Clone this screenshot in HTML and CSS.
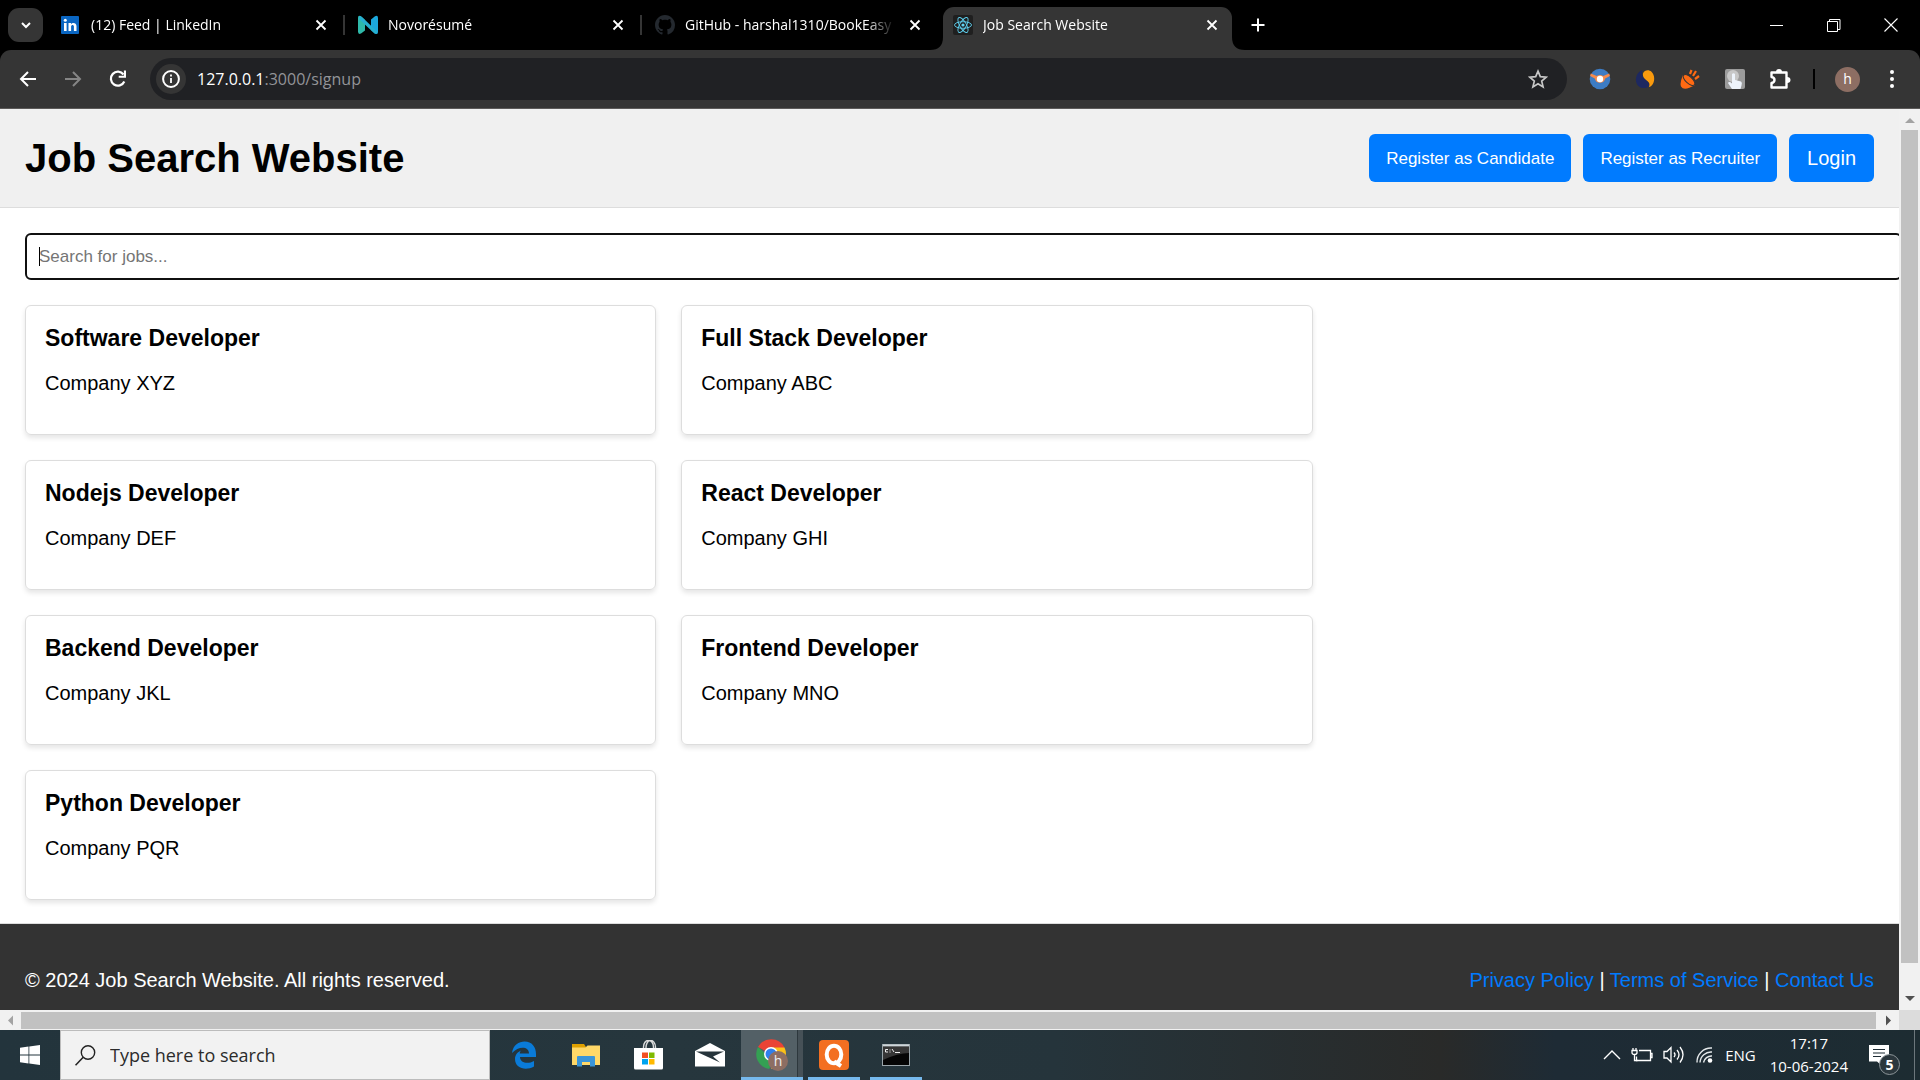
FILE: index.html
```html
<!DOCTYPE html>
<html lang="en">
<head>
<meta charset="utf-8">
<title>Job Search Website</title>
<link rel="stylesheet" href="styles.css">
</head>
<body>
<div class="desktop">
  <div class="browser">
    <div class="tabstrip">
      <button class="tab-search" aria-label="Search tabs"><svg width="12" height="12" viewBox="0 0 12 12"><path d="M2 4l4 4 4-4" fill="none" stroke="#fff" stroke-width="2"/></svg></button>
      <div class="tab">
        <svg class="favicon" viewBox="0 0 20 20"><rect x="0" y="1" width="18" height="18" rx="1" fill="#0a66c2"/><path d="M3 8h2.600v8H3zM7.500 8H10v1.200C11 7.300 15.500 7.200 15.500 11v5h-2.600v-4.500c0-2.300-2.800-2-2.800 0V16H7.500z" fill="#fff"/><circle cx="4.300" cy="5.200" r="1.500" fill="#fff"/></svg>
        <span class="tab-title">(12) Feed | LinkedIn</span>
        <button class="tab-close" aria-label="Close tab"><svg width="12" height="12" viewBox="0 0 12 12"><path d="M1.500 1.500l9 9M10.500 1.500l-9 9" stroke="#fff" stroke-width="1.800"/></svg></button>
      </div>
      <div class="tab">
        <svg class="favicon" viewBox="0 0 20 20"><path d="M0 2.500Q0 0 2.500 1L7 5V15.500L3 18.500Q0 20 0 16.500z" fill="#2fb9a9"/><path d="M13 4.500L17 1.200Q20 0 20 3v14q0 3-3 1.500L13 15z" fill="#1ca8dd"/><path d="M1 1Q2.500 .500 4 2l15.500 15q-1 2.500-3 1.500L1 4z" fill="#27b0cf"/></svg>
        <span class="tab-title">Novorésumé</span>
        <button class="tab-close" aria-label="Close tab"><svg width="12" height="12" viewBox="0 0 12 12"><path d="M1.500 1.500l9 9M10.500 1.500l-9 9" stroke="#fff" stroke-width="1.800"/></svg></button>
      </div>
      <div class="tab tab-last">
        <svg class="favicon" viewBox="0 0 16 16"><path fill="#24292f" d="M8 0C3.580 0 0 3.580 0 8c0 3.540 2.290 6.530 5.470 7.590.4.070.55-.17.55-.38 0-.19-.01-.82-.01-1.490-2.010.37-2.530-.49-2.690-.94-.09-.23-.48-.94-.82-1.130-.28-.15-.68-.52-.01-.53.63-.01 1.080.58 1.230.82.72 1.210 1.870.87 2.330.66.07-.52.28-.87.51-1.070-1.780-.2-3.640-.89-3.640-3.950 0-.87.31-1.590.82-2.150-.08-.2-.36-1.020.08-2.120 0 0 .67-.21 2.200.82.64-.18 1.320-.27 2-.27s1.360.09 2 .27c1.530-1.040 2.200-.82 2.200-.82.44 1.100.16 1.920.08 2.120.51.56.82 1.270.82 2.150 0 3.070-1.870 3.750-3.650 3.950.29.25.54.73.54 1.480 0 1.070-.01 1.930-.01 2.200 0 .21.15.46.55.38A8 8 0 0016 8c0-4.420-3.580-8-8-8z"/></svg>
        <span class="tab-title">GitHub - harshal1310/BookEasy</span>
        <button class="tab-close" aria-label="Close tab"><svg width="12" height="12" viewBox="0 0 12 12"><path d="M1.500 1.500l9 9M10.500 1.500l-9 9" stroke="#fff" stroke-width="1.800"/></svg></button>
      </div>
      <div class="tab tab-active">
        <svg class="tab-foot foot-left" viewBox="0 0 13 13"><path d="M13 0v13H0Q13 13 13 0z" fill="#353535"/></svg>
        <svg class="favicon" viewBox="0 0 20 20"><rect width="20" height="20" rx="2" fill="#1f1f1f"/><circle cx="10" cy="10" r="1.600" fill="#5fd3f3"/><g fill="none" stroke="#5fd3f3" stroke-width=".9"><ellipse cx="10" cy="10" rx="8.500" ry="3.300"/><ellipse cx="10" cy="10" rx="8.500" ry="3.300" transform="rotate(60 10 10)"/><ellipse cx="10" cy="10" rx="8.500" ry="3.300" transform="rotate(120 10 10)"/></g></svg>
        <span class="tab-title">Job Search Website</span>
        <button class="tab-close" aria-label="Close tab"><svg width="12" height="12" viewBox="0 0 12 12"><path d="M1.500 1.500l9 9M10.500 1.500l-9 9" stroke="#fff" stroke-width="1.800"/></svg></button>
        <svg class="tab-foot foot-right" viewBox="0 0 13 13"><path d="M0 0v13h13Q0 13 0 0z" fill="#353535"/></svg>
      </div>
      <button class="new-tab" aria-label="New tab"><svg width="14" height="14" viewBox="0 0 14 14"><path d="M7 .500v13M.500 7h13" stroke="#fff" stroke-width="2"/></svg></button>
      <div class="window-controls">
        <button aria-label="Minimize"><svg width="14" height="14" viewBox="0 0 14 14"><path d="M0 7.500h13" stroke="#fff"/></svg></button>
        <button aria-label="Restore"><svg width="14" height="14" viewBox="0 0 14 14"><path d="M.500 3.500h10v10H.500zM2.500 3.500v-2h10.500v10h-2" fill="none" stroke="#fff"/></svg></button>
        <button aria-label="Close"><svg width="14" height="14" viewBox="0 0 14 14"><path d="M.500.500l13 13M13.500.500l-13 13" stroke="#fff" stroke-width="1.100"/></svg></button>
      </div>
    </div>
    <div class="toolbar">
      <div class="nav-buttons">
        <button aria-label="Back"><svg width="20" height="20" viewBox="0 0 20 20"><path d="M18 10H3M10 3l-7 7 7 7" fill="none" stroke="#fff" stroke-width="2"/></svg></button>
        <button aria-label="Forward"><svg width="20" height="20" viewBox="0 0 20 20"><path d="M2 10h15M10 3l7 7-7 7" fill="none" stroke="#858585" stroke-width="2"/></svg></button>
        <button aria-label="Reload"><svg width="20" height="20" viewBox="0 0 20 20"><path d="M16.300 12.500A7 7 0 1 1 15.500 5.500" fill="none" stroke="#fff" stroke-width="2.200"/><path d="M18 1.500v7.300h-7.300V6.700h5.200V1.500z" fill="#fff"/></svg></button>
      </div>
      <div class="omnibox">
        <button class="site-info" aria-label="Site information"><svg width="18" height="18" viewBox="0 0 18 18"><circle cx="9" cy="9" r="7.900" fill="none" stroke="#fff" stroke-width="2"/><path d="M9 8v5M9 4.600v2" stroke="#fff" stroke-width="1.800"/></svg></button>
        <span class="url">127.0.0.1<span class="url-path">:3000/signup</span></span>
        <button class="star" aria-label="Bookmark"><svg width="20" height="20" viewBox="0 0 20 20"><path d="M10 2.200l2.300 5.500 5.900.5-4.500 3.900 1.400 5.800-5.100-3.100-5.100 3.100 1.400-5.800-4.500-3.900 5.900-.5z" fill="none" stroke="#c7c7c7" stroke-width="1.700"/></svg></button>
      </div>
      <div class="extensions">
        <button aria-label="Browser extension"><svg width="22" height="22" viewBox="0 0 22 22"><circle cx="11" cy="11" r="10.300" fill="#3d7cc4"/><path d="M1.800 5.500l6 2.400a6 6 0 0 1 6.400 0l6-2.400.7 2.500-4.700 2.500a5.300 5.300 0 0 1-10.400 0L1.100 8z" fill="#f58a4b"/><circle cx="11" cy="11" r="3.200" fill="#fff"/></svg></button>
        <button aria-label="Browser extension"><svg width="22" height="22" viewBox="0 0 22 22"><path d="M8.500 2C-.5 5-.5 20 10 20c6 0 6-4 3.500-7-3-3-7-4-5-11z" fill="#1d2860"/><path d="M9 5.500C11 .500 18.500 1 20 8.500c1 6-2 10-5 10.500 3-7-7-6-6-13.500z" fill="#f99a0e"/></svg></button>
        <button aria-label="Browser extension"><svg width="22" height="22" viewBox="0 0 22 22"><path d="M4 7l12 10Q5 23.500 2 18.500Q.500 15 4 7z" fill="#ff6a13"/><ellipse cx="10" cy="12" rx="7.300" ry="3.300" transform="rotate(42 10 12)" fill="#ff6a13" stroke="#353535"/><path d="M11 6l1.500-4M14 8l3-5M16 11l4-3" stroke="#ff6a13" stroke-width="2.200"/></svg></button>
        <button aria-label="Browser extension"><svg width="22" height="22" viewBox="0 0 22 22"><rect x="1" y="1" width="20" height="20" rx="2" fill="#9b9b9b"/><circle cx="9" cy="8" r="6" fill="#c7c7c7"/><path d="M8 6q1.500-1.500 3 0v6l6 1.500q1.500 1 .5 4L16.500 21H8l-4-6q1-2 4 .5z" fill="#edf3fb"/></svg></button>
        <button aria-label="Extensions"><svg width="22" height="22" viewBox="0 0 22 22"><path d="M2.500 4.500h15v15h-15v-4.500q3-.5 3-3t-3-3z" fill="none" stroke="#fff" stroke-width="2.400" stroke-linejoin="round"/><path d="M7 4q0-3 3-3t3 3zM18 9q3.500 0 3.500 3T18 15z" fill="#fff"/></svg></button>
      </div>
      <span class="toolbar-divider"></span>
      <button class="avatar" aria-label="Profile">h</button>
      <button class="menu" aria-label="Menu"><svg width="6" height="20" viewBox="0 0 6 20"><g fill="#fff"><circle cx="3" cy="3" r="2"/><circle cx="3" cy="10" r="2"/><circle cx="3" cy="17" r="2"/></g></svg></button>
    </div>
  </div>

  <div class="viewport">
    <div class="page">
      <header class="site-header">
        <h1 class="site-title">Job Search Website</h1>
        <div class="actions">
          <button class="btn">Register as Candidate</button>
          <button class="btn">Register as Recruiter</button>
          <a class="btn btn-login" href="#">Login</a>
        </div>
      </header>
      <main class="content">
        <div class="search"><input class="search-input" type="text" placeholder="Search for jobs..." aria-label="Search for jobs"></div>
        <div class="jobs">
          <article class="job"><h3>Software Developer</h3><p>Company XYZ</p></article>
          <article class="job"><h3>Full Stack Developer</h3><p>Company ABC</p></article>
          <article class="job"><h3>Nodejs Developer</h3><p>Company DEF</p></article>
          <article class="job"><h3>React Developer</h3><p>Company GHI</p></article>
          <article class="job"><h3>Backend Developer</h3><p>Company JKL</p></article>
          <article class="job"><h3>Frontend Developer</h3><p>Company MNO</p></article>
          <article class="job"><h3>Python Developer</h3><p>Company PQR</p></article>
        </div>
      </main>
      <footer class="site-footer">
        <p>© 2024 Job Search Website. All rights reserved.</p>
        <p><a href="#">Privacy Policy</a> | <a href="#">Terms of Service</a> | <a href="#">Contact Us</a></p>
      </footer>
    </div>
    <div class="scroll-v">
      <svg width="21" height="21" viewBox="0 0 21 21"><path d="M6 14h10L11 9z" fill="#a3a3a3"/></svg>
      <span class="thumb-v"></span>
      <svg width="21" height="21" viewBox="0 0 21 21"><path d="M6 7h10l-5 5z" fill="#505050"/></svg>
    </div>
    <div class="scroll-h">
      <svg width="21" height="20" viewBox="0 0 21 20"><path d="M13 5.500v10l-5-5z" fill="#a3a3a3"/></svg>
      <span class="thumb-h"></span>
      <svg width="21" height="20" viewBox="0 0 21 20"><path d="M8 5.500v10l5-5z" fill="#505050"/></svg>
    </div>
    <div class="scroll-corner"></div>
  </div>

  <div class="taskbar">
    <button class="start" aria-label="Start"><svg width="20" height="20" viewBox="0 0 20 20"><path d="M0 2.800l8.500-1.200v8H0zM9.300 1.500L20 0v9.600H9.300zM0 10.400h8.500v8L0 17.200zM9.300 10.400H20V20L9.300 18.500z" fill="#fff"/></svg></button>
    <div class="task-search">
      <svg width="21" height="21" viewBox="0 0 21 21"><circle cx="13" cy="7.500" r="6.700" fill="none" stroke="#222" stroke-width="1.400"/><path d="M8.200 12.200L.500 20.300" stroke="#222" stroke-width="1.600"/></svg>
      <input class="task-input" type="text" placeholder="Type here to search" aria-label="Type here to search">
    </div>
    <div class="apps">
      <button class="app" aria-label="Edge"><svg width="26" height="28" viewBox="0 0 26 28"><path d="M1 12C2 4 8 .500 13.500.500 21 .500 25 6 25 13v3H9c0 6 8 7.500 14 4v5.500C15 30 4 27.500 4 18c0-4 2.500-7 6-8.500C9 10.500 8.700 12 8.800 12.500H18C18 5.500 8 4.500 1 12z" fill="#0a7bd8"/></svg></button>
      <button class="app" aria-label="File Explorer"><svg width="28" height="24" viewBox="0 0 28 24"><path d="M0 1h12l2 3v5H0z" fill="#dfa000"/><path d="M1 4.500h12.500l2-2H28V22H0V4.500z" fill="#ffd868"/><path d="M5 23.500V14q0-1 1-1h16q1 0 1 1v9.500h-5V19h-8v4.500z" fill="#3a95d8"/></svg></button>
      <button class="app" aria-label="Store"><svg width="29" height="30" viewBox="0 0 29 30"><path d="M9.500 8V7a4.500 6 0 0 1 10 0v1M12 8a4 6 0 0 1 9.500-1v1" fill="none" stroke="#ddd" stroke-width="1.400"/><path d="M0 8h29v20q0 1.500-1.500 1.500h-26Q0 29.500 0 28z" fill="#fff"/><path d="M8 12.500h6v5.500H8z" fill="#f25022"/><path d="M15 12.500h5.500v5.500H15z" fill="#7fba00"/><path d="M8 19h6v5.500H8z" fill="#00a4ef"/><path d="M15 19h5.500v5.500H15z" fill="#ffb900"/></svg></button>
      <button class="app" aria-label="Mail"><svg width="30" height="24" viewBox="0 0 30 24"><path d="M0 8L15 0l15 8v15.500H0z" fill="#fff"/><path d="M1 8.500h28l-11 5 7 6z" fill="#26343b"/></svg></button>
      <button class="app app-active" aria-label="Chrome"><svg width="32" height="32" viewBox="0 0 32 32"><path d="M15 15L2 8A15 15 0 0 1 28.500 8.500z" fill="#ea4335"/><path d="M2 8a15 15 0 0 0 11 22l5-8z" fill="#34a053"/><path d="M15 8.500h13.500A15 15 0 0 1 15 30l7-11z" fill="#fbc116"/><circle cx="15" cy="15" r="7" fill="#fff"/><circle cx="15" cy="15" r="5.500" fill="#2f80ed"/><circle cx="22" cy="22" r="10" fill="#8d6e63"/><text x="22" y="27" fill="#eee" font-size="14" text-anchor="middle" font-family="Open Sans, sans-serif">h</text></svg></button>
      <button class="app app-open" aria-label="Q"><svg width="30" height="30" viewBox="0 0 30 30"><rect width="30" height="30" rx="4" fill="#f36f21"/><ellipse cx="15" cy="14.500" rx="7.300" ry="8.800" fill="none" stroke="#fff" stroke-width="4"/><path d="M15 21.500l7 4.500" stroke="#fff" stroke-width="4"/></svg></button>
      <button class="app app-open" aria-label="Command Prompt"><svg width="28" height="22" viewBox="0 0 28 22"><rect x=".5" y=".5" width="27" height="21" fill="#050505" stroke="#9aa5aa"/><path d="M1 1.500h26" stroke="#cfd6da" stroke-width="2"/><path d="M1 3h26v6Q16 9 1 16z" fill="#363636"/><path d="M3.500 5.500h2.500M3.500 8h2.500M3.500 5.500V8M8 5.500v1M8 7.500v1M10 5l2 3M13 8.500h5" stroke="#eee" fill="none"/></svg></button>
    </div>
    <div class="tray">
      <svg width="18" height="22" viewBox="0 0 18 22"><path d="M1 15l8-8 8 8" fill="none" stroke="#fff" stroke-width="1.400"/></svg>
      <svg width="22" height="22" viewBox="0 0 22 22"><path d="M8 6.500h11.500v10H5.500v-4M19.500 9.500H21v4h-1.500" fill="none" stroke="#fff" stroke-width="1.300"/><path d="M1 6.500h5v2q0 2-2.500 2T1 8.500zM2 4v2M5 4v2M3.500 10v6.500h3" fill="none" stroke="#fff" stroke-width="1.300"/></svg>
      <svg width="22" height="22" viewBox="0 0 22 22"><path d="M1 7.500h3l4-4v14.500l-4-4H1zM11 8.500q2 2.200 0 4.500M14 6q4 4.700 0 9.500M17 3q6 7.700 0 15.500" fill="none" stroke="#fff" stroke-width="1.300"/></svg>
      <svg width="20" height="22" viewBox="0 0 20 22"><g fill="none" stroke="#e4e8ea" stroke-width="1.400"><path d="M2 18.500A14 14 0 0 1 17 4M5 18.500A11 11 0 0 1 17 8M8.500 18.500A8 8 0 0 1 17 12"/></g><circle cx="15" cy="16.500" r="2.300" fill="#fff"/></svg>
      <span class="lang">ENG</span>
      <div class="clock"><span>17:17</span><span>10-06-2024</span></div>
      <button class="notify" aria-label="Notifications"><svg width="20" height="20" viewBox="0 0 20 20"><path d="M0 0h20v16.500h-8V20l-4-3.500H0z" fill="#fff"/><path d="M4 4.500h12M4 8h12M4 11.500h8" stroke="#1f2d35" stroke-width="1.100"/></svg><span class="badge">5</span></button>
      <span class="show-desktop"></span>
    </div>
  </div>
</div>
</body>
</html>
```
FILE: styles.css
```css
* { box-sizing: border-box; }
body { margin: 0; font-family: "Liberation Sans", Arial, sans-serif; font-size: 20px; line-height: 23px; color: #000; }
button { border: 0; padding: 0; background: none; color: inherit; font: inherit; display: flex; align-items: center; justify-content: center; }
svg { display: block; flex: none; }

.desktop { display: grid; grid-template-rows: auto minmax(0, 1fr) auto; height: 100vh; overflow: hidden; }

/* Browser chrome */
.browser { background: #000; color: #fff; font-family: "Open Sans", "Noto Sans", sans-serif; }
.tabstrip { display: flex; height: 50px; padding-left: 8px; }
.tab-search { width: 35px; height: 34px; margin: 8px 5px 0 0; border-radius: 11px; background: #353535; }
.tab { position: relative; display: flex; align-items: center; flex: 0 1 297px; min-width: 0; padding: 0 14px 0 13px; font-size: 14px; line-height: 20px; }
.tab::after { content: ""; position: absolute; right: 0; top: 15px; width: 2px; height: 20px; background: #353535; }
.tab-last::after, .tab-active::after { display: none; }
.favicon { width: 20px; height: 20px; margin-right: 10px; }
.tab-title { flex: 1; overflow: hidden; white-space: nowrap; margin-right: 10px; mask-image: linear-gradient(to right, #000 calc(100% - 30px), transparent); }
.tab-close { width: 20px; height: 20px; }
.tab-active { flex-basis: 289px; height: 43px; margin: 7px 0 0 4px; padding: 0 10px 7px; border-radius: 11px 11px 0 0; background: #353535; }
.tab-foot { position: absolute; bottom: 0; width: 13px; height: 13px; }
.foot-left { right: 100%; }
.foot-right { left: 100%; }
.new-tab { width: 52px; height: 50px; }
.window-controls { display: flex; margin-left: auto; padding-right: 1px; }
.window-controls button { width: 57px; height: 50px; }

.toolbar { display: flex; align-items: center; height: 59px; padding-right: 18px; border-radius: 11px 11px 0 0; background: #353535; border-bottom: 1px solid #5c5a59; }
.nav-buttons { display: flex; width: 150px; padding-left: 5px; }
.nav-buttons button { width: 45px; height: 42px; }
.omnibox { display: flex; flex: 1; align-items: center; height: 42px; border-radius: 21px; padding: 0 19px 0 6px; background: #202124; }
.site-info { width: 30px; height: 30px; border-radius: 50%; background: #353535; }
.url { flex: 1; margin-left: 11px; font-size: 16px; }
.url-path { color: #939498; }
.extensions { display: flex; padding-left: 10px; }
.extensions button { width: 45px; height: 42px; }
.toolbar-divider { width: 2px; height: 20px; margin-left: 11px; background: #000; }
.avatar { width: 25px; height: 25px; margin: 0 22px 0 20px; border-radius: 50%; background: #8d6e63; font-size: 14px; line-height: 20px; }
.menu { width: 20px; height: 42px; }

/* Page area and its scroll bars */
.viewport { display: grid; grid-template: minmax(0, 1fr) 20px / minmax(0, 1fr) 21px; }
.page { overflow: hidden; background: #fff; }
.scroll-v { display: flex; flex-direction: column; background: #f1f1f1; }
.scroll-h { display: flex; background: #f1f1f1; }
.thumb-v { width: 17px; height: 97%; margin: 0 2px 26px; background: #c1c1c1; }
.thumb-h { flex: 1; margin: 2px 2px 1px 0; background: #c1c1c1; }
.scroll-corner { background: #dcdcdc; }

.site-header { display: flex; align-items: center; justify-content: space-between; padding: 25px; border-bottom: 1px solid #ddd; background: #f0f0f0; }
.site-title { margin: 0; font-size: 40px; line-height: 46px; }
.actions { display: flex; gap: 12px; }
.btn { display: flex; align-items: center; height: 48px; padding: 0 17px; border-radius: 6px; background: #007bff; color: #fff; font-size: 17px; text-decoration: none; }
.btn-login { padding: 0 18px; font-size: 20px; }

.content { padding: 25px 25px 23px; }
.search { position: relative; margin-bottom: 25px; }
.search::before { content: ""; position: absolute; left: 14px; top: 14px; width: 1px; height: 19px; background: #000; }
.search-input { display: block; box-sizing: content-box; width: 100%; height: 19px; padding: 12px; border: 2px solid #101010; border-radius: 6px; outline: 0; font: 17px/19px "Liberation Sans", Arial, sans-serif; }
.search-input::placeholder { color: #757575; }
.jobs { display: flex; flex-wrap: wrap; gap: 25px; }
.job { box-sizing: content-box; width: calc(33.33% - 25px); padding: 19px; border: 1px solid #ddd; border-radius: 6px; box-shadow: 0 3px 5px rgba(0, 0, 0, .1); }
.job h3 { margin: 0 0 20px; font-size: 23px; line-height: 27px; }
.job p { margin: 0 0 20px; }

.site-footer { display: flex; justify-content: space-between; padding: 25px; border-top: 1px solid #ddd; background: #333; color: #fff; }
.site-footer p { margin: 20px 0; }
.site-footer a { color: #007bff; text-decoration: none; }

/* Taskbar */
.taskbar { display: flex; height: 50px; background: linear-gradient(to right, #23343c, #26363d 35%, #25343b 55%, #292a29 75%, #1e2b35 81%, #1d2c32); color: #fff; font-family: "Open Sans", "Noto Sans", sans-serif; }
.start { width: 60px; }
.task-search { display: flex; align-items: center; gap: 14px; width: 430px; padding-left: 14px; border: 1px solid #bcbcbc; background: #f2f2f2; }
.task-input { flex: 1; border: 0; padding: 0; outline: 0; background: none; font: 18px/24px "Open Sans", "Noto Sans", sans-serif; }
.task-input::placeholder { color: #2b2b2b; }
.apps { display: flex; padding-left: 3px; }
.app { width: 52px; margin: 0 5px; border-bottom: 3px solid transparent; border-top: 3px solid transparent; }
.app-open { border-bottom-color: #76b9ed; }
.app-active { width: 62px; margin: 0; border: 0; background: linear-gradient(#76b9ed, #76b9ed) bottom / 100% 3px no-repeat, linear-gradient(to right, #536066 56px, #2d383d 56px, #2d383d 57px, #465157 57px); }
.tray { display: flex; align-items: center; margin-left: auto; gap: 10px; font-size: 15px; line-height: 23px; }
.lang { margin-left: 0; }
.clock { display: flex; flex-direction: column; align-items: center; margin: 0 11px 0 4px; }
.notify { position: relative; }
.badge { position: absolute; left: 10px; top: 9px; width: 21px; height: 21px; border: 1px solid #8c9599; border-radius: 50%; background: #2b373d; font-size: 14px; font-weight: 700; line-height: 19px; text-align: center; }
.show-desktop { align-self: stretch; width: 6px; margin-left: 15px; border-left: 1px solid #6c777c; }
```
